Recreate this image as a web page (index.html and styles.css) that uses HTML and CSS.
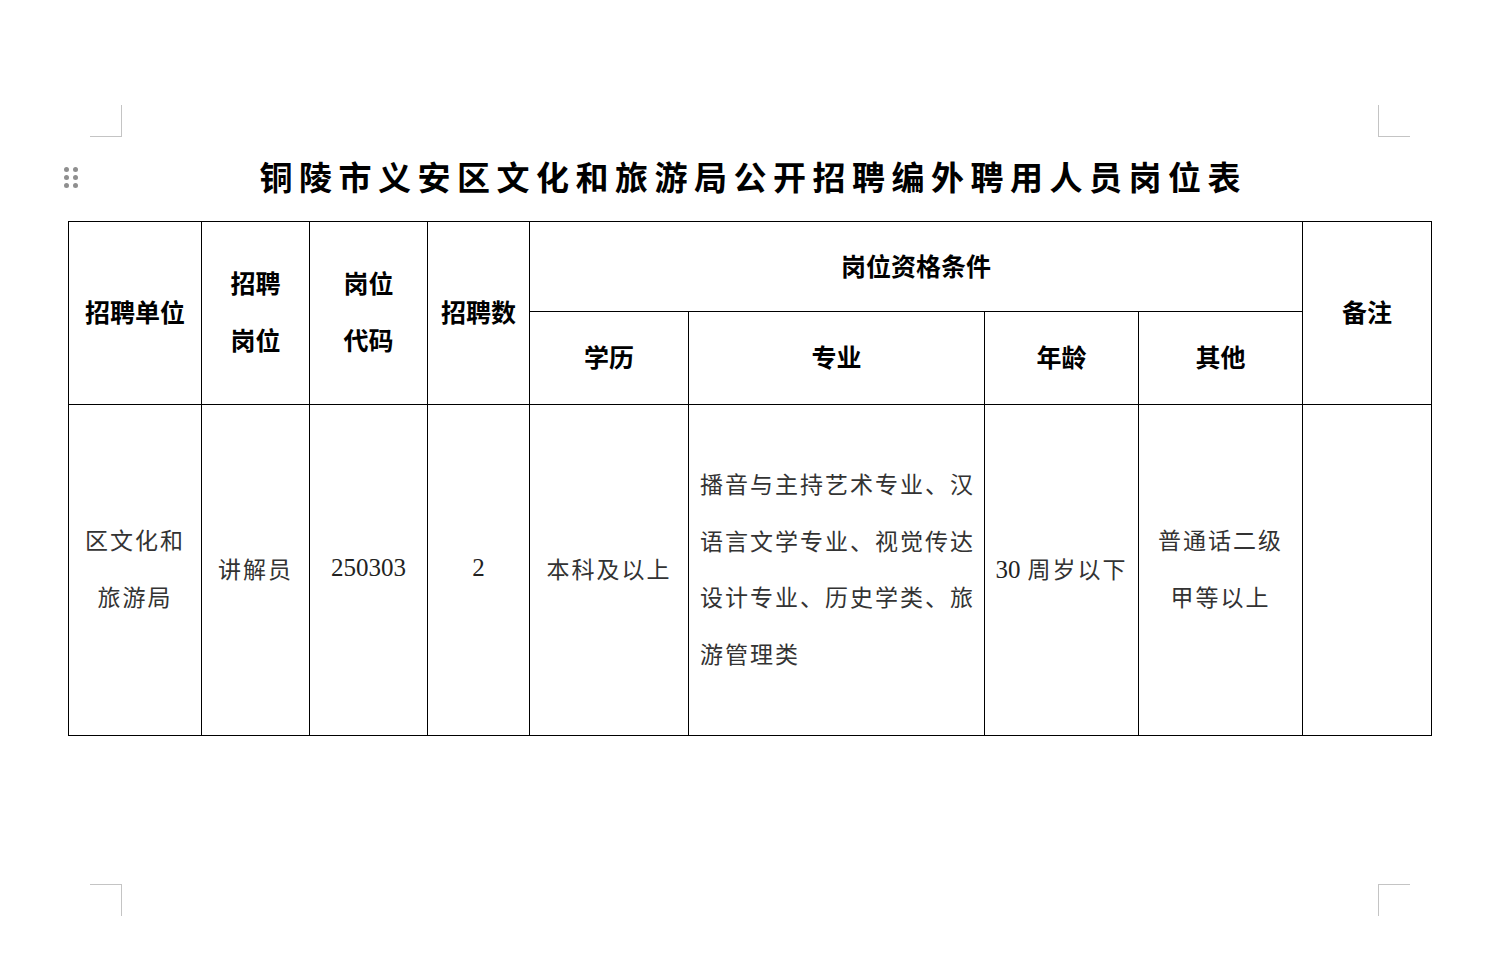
FILE: index.html
```html
<!DOCTYPE html>
<html lang="zh-CN">
<head>
<meta charset="utf-8">
<title>岗位表</title>
<link rel="stylesheet" href="styles.css">
</head>
<body>
<div class="sheet">
  <span class="corner corner-tl"></span>
  <span class="corner corner-tr"></span>
  <span class="corner corner-bl"></span>
  <span class="corner corner-br"></span>
  <span class="handle">
    <i></i><i></i><i></i><i></i><i></i><i></i>
  </span>
  <div class="doc">
    <h1 class="title">铜陵市义安区文化和旅游局公开招聘编外聘用人员岗位表</h1>
    <table class="grid">
      <colgroup>
        <col class="c1"><col class="c2"><col class="c3"><col class="c4"><col class="c5">
        <col class="c6"><col class="c7"><col class="c8"><col class="c9">
      </colgroup>
      <tr class="r1">
        <th rowspan="2">招聘单位</th>
        <th rowspan="2" class="two">招聘<br>岗位</th>
        <th rowspan="2" class="two">岗位<br>代码</th>
        <th rowspan="2">招聘数</th>
        <th colspan="4">岗位资格条件</th>
        <th rowspan="2">备注</th>
      </tr>
      <tr class="r2">
        <th>学历</th>
        <th>专业</th>
        <th>年龄</th>
        <th>其他</th>
      </tr>
      <tr class="r3">
        <td class="two">区文化和<br>旅游局</td>
        <td>讲解员</td>
        <td class="num">250303</td>
        <td class="num">2</td>
        <td>本科及以上</td>
        <td class="major">播音与主持艺术专业、汉<br>语言文学专业、视觉传达<br>设计专业、历史学类、旅<br>游管理类</td>
        <td><span class="num">30</span> 周岁以下</td>
        <td class="two">普通话二级<br>甲等以上</td>
        <td></td>
      </tr>
    </table>
  </div>
</div>
</body>
</html>
```

FILE: styles.css
```css
html, body {
  margin: 0;
  padding: 0;
  background: #ffffff;
}

.sheet {
  position: relative;
  width: 1502px;
  height: 972px;
  overflow: hidden;
}

.corner {
  position: absolute;
  width: 31px;
  height: 31px;
  border-color: #c4c4c4;
  border-style: solid;
  border-width: 0;
}
.corner-tl { left: 90px; top: 105px; border-right-width: 1px; border-bottom-width: 1px; }
.corner-tr { left: 1378px; top: 105px; border-left-width: 1px; border-bottom-width: 1px; }
.corner-bl { left: 90px; top: 884px; border-right-width: 1px; border-top-width: 1px; }
.corner-br { left: 1378px; top: 884px; border-left-width: 1px; border-top-width: 1px; }

.handle {
  position: absolute;
  left: 64px;
  top: 167px;
  width: 14px;
  display: grid;
  grid-template-columns: 5px 5px;
  column-gap: 4px;
  row-gap: 3px;
}
.handle i {
  display: block;
  width: 5px;
  height: 5px;
  border-radius: 50%;
  background: #8f8f8f;
}

.doc {
  margin-left: 68px;
  width: 1364px;
  padding-top: 154px;
}

.title {
  margin: 0 0 23px 0;
  height: 44px;
  line-height: 44px;
  text-align: center;
  font-family: "Noto Sans CJK SC", sans-serif;
  font-weight: 700;
  font-size: 33px;
  letter-spacing: 6.5px;
  padding-left: 6.5px;
  color: #000;
}

.grid {
  width: 1363px;
  table-layout: fixed;
  border-collapse: collapse;
  font-family: "Liberation Serif", "Noto Sans CJK SC", serif;
}
.grid th, .grid td {
  border: 1px solid #000;
  text-align: center;
  vertical-align: middle;
  padding: 0 0 4px 0;
}
.grid th {
  font-family: "Noto Sans CJK SC", sans-serif;
  font-weight: 700;
  font-size: 25px;
  color: #000;
}
.grid td {
  font-family: "Noto Sans CJK SC", sans-serif;
  font-weight: 400;
  font-size: 23px;
  letter-spacing: 2px;
  color: #333;
}
.grid .two { line-height: 57px; }
.grid .num {
  font-family: "Liberation Serif", serif;
  font-size: 25px;
  letter-spacing: 0;
  color: #222;
}
.grid td.major {
  text-align: left;
  padding-left: 11px;
  line-height: 56.5px;
}

.c1 { width: 133px; }
.c2 { width: 108px; }
.c3 { width: 118px; }
.c4 { width: 102px; }
.c5 { width: 159px; }
.c6 { width: 296px; }
.c7 { width: 154px; }
.c8 { width: 164px; }
.c9 { width: 129px; }

.r1 { height: 90px; }
.r2 { height: 93px; }
.r3 { height: 331px; }
```
